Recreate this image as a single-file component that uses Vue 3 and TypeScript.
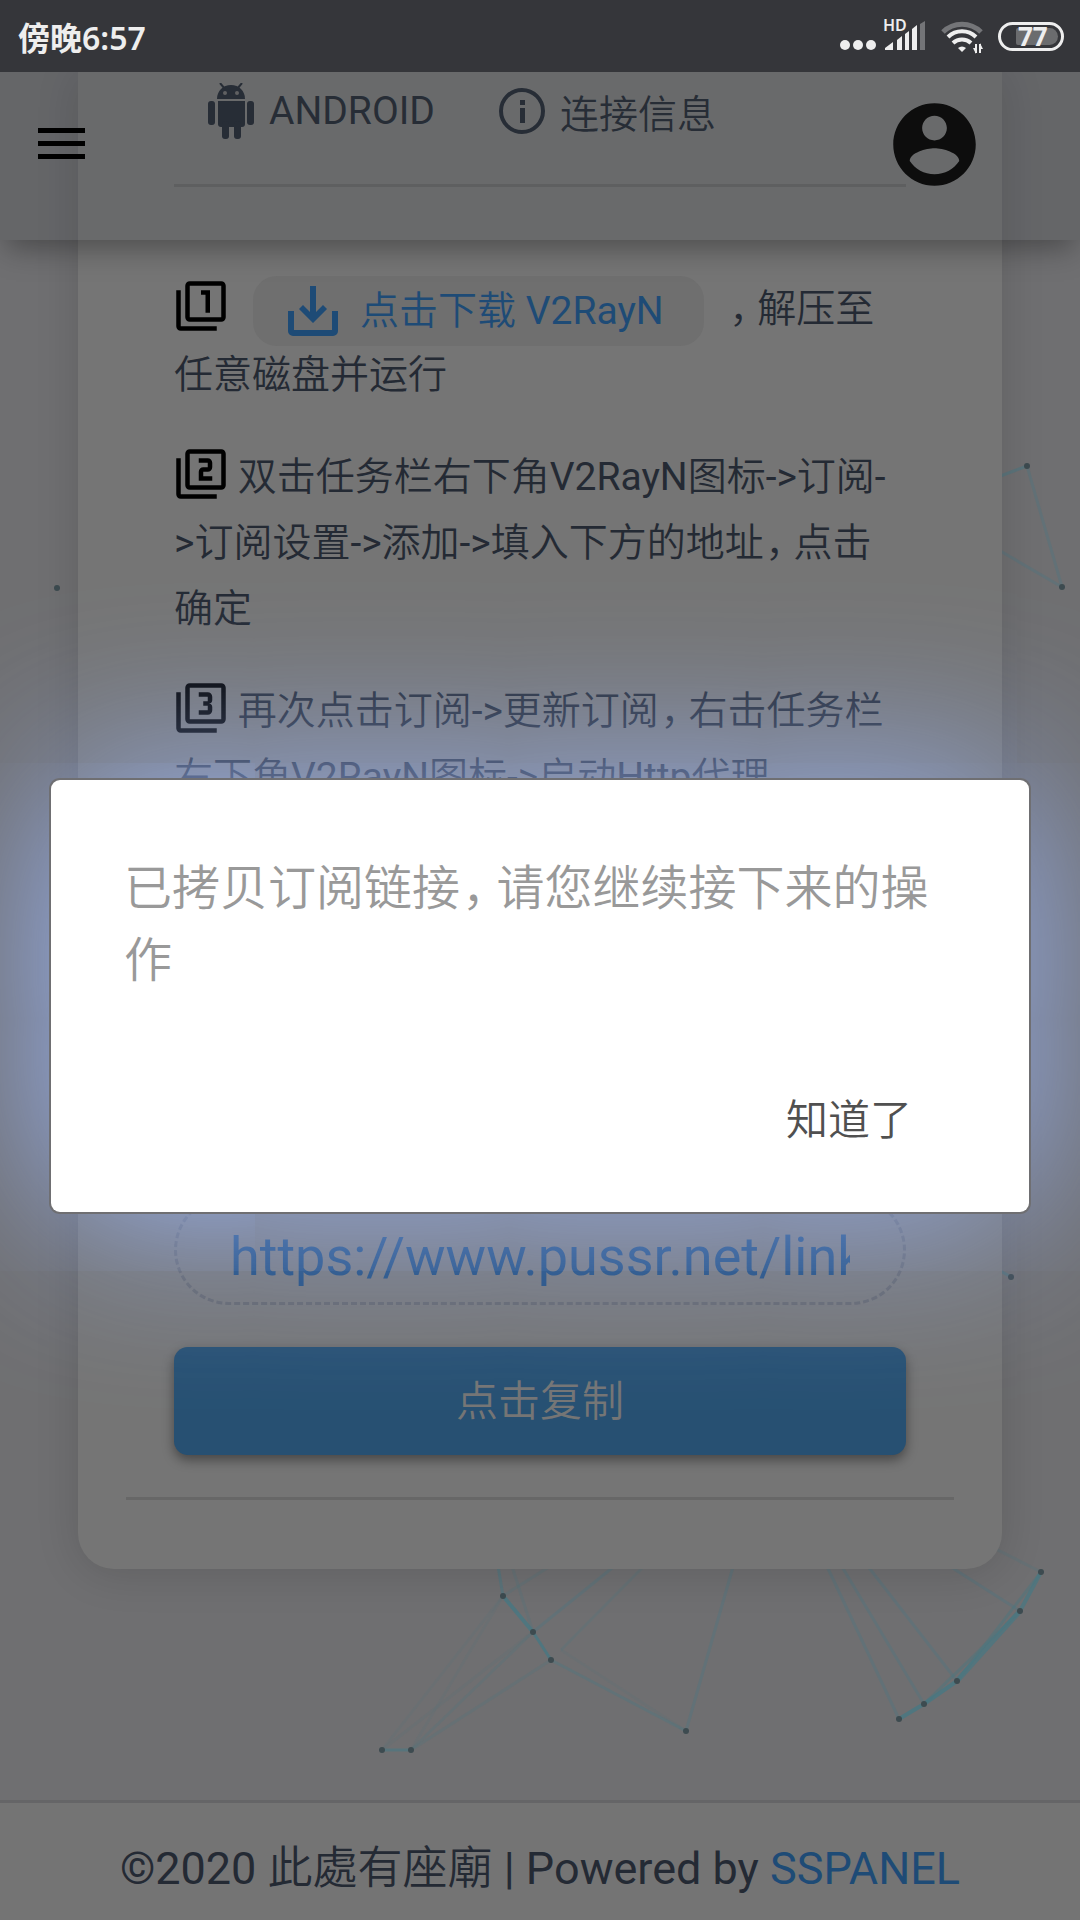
<script setup lang="ts">
import { ref } from 'vue'

interface Node {
  x: number
  y: number
}

interface Edge {
  from: Node
  to: Node
  opacity: number
  width: number
}

const link = ref('https://www.pussr.net/link/subscription?mu=2')
const dialogOpen = ref(true)

const frames =
  'M3 5H1v16c0 1.1.9 2 2 2h16v-2H3V5zM21 1H7c-1.1 0-2 .9-2 2v14c0 1.1.9 2 2 2h14c1.1 0 2-.9 2-2V3c0-1.1-.9-2-2-2zm0 16H7V3h14v14z'
const numerals: string[] = [
  'M14 15h2V5h-4v2h2v8z',
  'M17 13h-4v-2h2c1.1 0 2-.89 2-2V7c0-1.11-.9-2-2-2h-4v2h4v2h-2c-1.1 0-2 .89-2 2v4h6v-2z',
  'M17 13v-1.5c0-.83-.67-1.5-1.5-1.5.83 0 1.5-.67 1.5-1.5V7c0-1.11-.9-2-2-2h-4v2h4v2h-2v2h2v2h-4v2h4c1.1 0 2-.89 2-2z',
]

const nodes: Node[] = [
  { x: 503, y: 1596 }, { x: 533, y: 1632 }, { x: 551, y: 1660 }, { x: 382, y: 1750 },
  { x: 411, y: 1750 }, { x: 686, y: 1731 }, { x: 899, y: 1719 }, { x: 924, y: 1704 },
  { x: 957, y: 1681 }, { x: 1020, y: 1611 }, { x: 1041, y: 1572 }, { x: 1027, y: 466 },
  { x: 1062, y: 587 }, { x: 57, y: 588 }, { x: 1011, y: 1277 },
]

function edge(x1: number, y1: number, x2: number, y2: number, opacity: number, width = 3): Edge {
  return { from: { x: x1, y: y1 }, to: { x: x2, y: y2 }, opacity, width }
}

const edges: Edge[] = [
  edge(503, 1596, 533, 1632, 0.8, 4), edge(533, 1632, 551, 1660, 0.8),
  edge(382, 1750, 411, 1750, 0.6), edge(899, 1719, 924, 1704, 0.8, 4),
  edge(924, 1704, 957, 1681, 0.8, 4), edge(957, 1681, 1020, 1611, 0.7, 5),
  edge(1020, 1611, 1041, 1572, 0.7, 4), edge(924, 1704, 1020, 1611, 0.4),
  edge(957, 1681, 1041, 1572, 0.4), edge(503, 1596, 497, 1560, 0.5),
  edge(503, 1596, 560, 1560, 0.2), edge(533, 1632, 510, 1560, 0.2),
  edge(533, 1632, 622, 1560, 0.3), edge(561, 1650, 650, 1560, 0.2),
  edge(551, 1660, 686, 1731, 0.35), edge(561, 1650, 686, 1731, 0.1),
  edge(686, 1731, 735, 1560, 0.3), edge(382, 1750, 503, 1596, 0.1),
  edge(382, 1750, 533, 1632, 0.1), edge(411, 1750, 503, 1596, 0.1),
  edge(411, 1750, 533, 1632, 0.2), edge(411, 1750, 551, 1660, 0.2),
  edge(899, 1719, 824, 1560, 0.3), edge(924, 1704, 838, 1560, 0.3),
  edge(957, 1681, 863, 1560, 0.3), edge(1020, 1611, 940, 1560, 0.3),
  edge(1041, 1572, 990, 1546, 0.2), edge(990, 480, 1027, 466, 0.5),
  edge(1027, 466, 1062, 587, 0.3), edge(1062, 587, 990, 545, 0.3),
  edge(990, 1265, 1011, 1277, 0.5),
]
</script>

<template>
  <div class="screen">
    <div class="status">
      <span class="clock">傍晚6:57</span>
      <div class="indicators">
        <svg width="86" height="40" viewBox="0 0 86 40" aria-hidden="true">
          <g fill="#eee">
            <circle cx="5" cy="29" r="5" />
            <circle cx="18" cy="29" r="5" />
            <circle cx="31" cy="29" r="5" />
            <path d="M45 34v-2l8-6v8zM57 34V24l5-4v14zM65 34V18l4-3v19zM72 34V13l5-4v25z" />
          </g>
          <path d="M80 34V8l5-3v29z" fill="#747578" />
          <text class="hd" x="43" y="15">HD</text>
        </svg>
        <svg width="42" height="40" viewBox="0 0 42 40" fill="none" stroke="#eee" stroke-width="4" aria-hidden="true">
          <path d="M2 16a27 27 0 0 1 38 0" stroke="#747578" stroke-width="5" />
          <path d="M7 21a20 20 0 0 1 28 0" />
          <path d="M12 27a13 13 0 0 1 18 0" />
          <path d="M17 32l4 4 4-4a6 6 0 0 0-8 0z" fill="#eee" stroke="none" />
          <path d="M35 28v9M39 28v9" stroke-width="2" />
          <path d="M32 32h3v6zM42 33h-3v-6z" fill="#eee" stroke="none" />
        </svg>
        <span class="battery"><span class="level">77</span></span>
      </div>
    </div>

    <div class="page">
      <svg class="network" width="1080" height="1848" viewBox="0 72 1080 1848" aria-hidden="true">
        <line
          v-for="(e, i) in edges"
          :key="`e${i}`"
          :x1="e.from.x"
          :y1="e.from.y"
          :x2="e.to.x"
          :y2="e.to.y"
          :stroke-opacity="e.opacity"
          :stroke-width="e.width"
          stroke="#477883"
        />
        <circle v-for="(n, i) in nodes" :key="`n${i}`" :cx="n.x" :cy="n.y" r="3" fill="#3d4b50" />
      </svg>

      <header class="topbar">
        <button class="icon-button" type="button" aria-label="菜单">
          <svg width="47" height="32" viewBox="0 0 47 32" aria-hidden="true">
            <path d="M0 0h47v5H0zM0 13h47v5H0zM0 26h47v5H0z" fill="#000" />
          </svg>
        </button>
        <button class="icon-button" type="button" aria-label="账户">
          <svg width="99" height="99" viewBox="0 0 24 24" aria-hidden="true">
            <path
              fill="#0d0d0d"
              d="M12 2C6.480 2 2 6.480 2 12s4.480 10 10 10 10-4.480 10-10S17.520 2 12 2zm0 3c1.660 0 3 1.340 3 3s-1.340 3-3 3-3-1.340-3-3 1.340-3 3-3zm0 14.200c-2.500 0-4.710-1.280-6-3.220.030-1.990 4-3.080 6-3.080 1.990 0 5.970 1.090 6 3.080-1.290 1.940-3.500 3.220-6 3.220z"
            />
          </svg>
        </button>
      </header>

      <main class="card">
        <div class="body">
          <nav class="tabs">
            <a class="tab" href="#android">
              <svg width="46" height="56" viewBox="0 0 46 56" fill="currentColor" aria-hidden="true">
                <path d="M9 16C9 8 15 2 23 2s14 6 14 14z" />
                <path d="M12 0l5 6M34 0l-5 6" stroke="currentColor" stroke-width="2" />
                <circle cx="17" cy="10" r="2" fill="#696969" />
                <circle cx="29" cy="10" r="2" fill="#696969" />
                <path d="M10 18h27v23a3 3 0 0 1-3 3H13a3 3 0 0 1-3-3z" />
                <rect x="0" y="18" width="7" height="24" rx="3" />
                <rect x="39" y="18" width="7" height="24" rx="3" />
                <rect x="14" y="38" width="7" height="18" rx="3" />
                <rect x="26" y="38" width="7" height="18" rx="3" />
              </svg>
              <span>ANDROID</span>
            </a>
            <a class="tab" href="#info">
              <svg width="46" height="46" viewBox="0 0 46 46" aria-hidden="true">
                <circle cx="23" cy="23" r="21" fill="none" stroke="currentColor" stroke-width="4" />
                <path d="M21 12h5v5h-5zM21 20h5v15h-5z" fill="currentColor" />
              </svg>
              <span>连接信息</span>
            </a>
          </nav>

          <p class="step">
            <svg class="num" viewBox="0 0 24 24" aria-hidden="true"><path :d="frames" /><path :d="numerals[0]" /></svg>
            <a class="download" href="#download"
              ><svg width="50" height="50" viewBox="0 0 50 50" aria-hidden="true">
                <path
                  fill="currentColor"
                  d="M22 0h6v26l7-7 4 4-14 14-14-14 4-4 7 7zM0 25h6v19h38V25h6v20a5 5 0 0 1-5 5H5a5 5 0 0 1-5-5z"
                /></svg
              ><span>点击下载 V2RayN</span></a
            ><span class="comma">，</span>解压至任意磁盘并运行
          </p>
          <p class="step">
            <svg class="num" viewBox="0 0 24 24" aria-hidden="true"><path :d="frames" /><path :d="numerals[1]" /></svg>
            双击任务栏右下角V2RayN图标-&gt;订阅-&gt;订阅设置-&gt;添加-&gt;填入下方的地址<span class="comma">，</span>点击确定
          </p>
          <p class="step">
            <svg class="num" viewBox="0 0 24 24" aria-hidden="true"><path :d="frames" /><path :d="numerals[2]" /></svg>
            再次点击订阅-&gt;更新订阅<span class="comma">，</span>右击任务栏右下角V2RayN图标-&gt;启动Http代理
          </p>

          <input v-model="link" class="link" type="text" aria-label="订阅链接" readonly />
          <button class="copy" type="button" @click="dialogOpen = true">点击复制</button>
        </div>
      </main>

      <footer class="footer">©2020 此處有座廟 | Powered by <a href="#sspanel">SSPANEL</a></footer>

      <div v-if="dialogOpen" class="overlay">
        <section class="dialog" role="alertdialog" aria-describedby="message">
          <p id="message">已拷贝订阅链接<span class="comma">，</span>请您继续接下来的操作</p>
          <button class="confirm" type="button" @click="dialogOpen = false">知道了</button>
        </section>
      </div>
    </div>
  </div>
</template>

<style>
body {
  margin: 0;
}
</style>

<style scoped>
.screen {
  min-height: 100vh;
  display: flex;
  flex-direction: column;
  overflow: hidden;
  background: #6f6f71;
  color: #242a34;
  font-family: Roboto, 'Noto Sans CJK SC DemiLight', 'Noto Sans CJK SC Light', 'Noto Sans CJK SC', sans-serif;
  font-size: 39px;
}

button {
  border: 0;
  padding: 0;
  background: none;
  font: inherit;
  color: inherit;
}

a {
  color: inherit;
  text-decoration: none;
}

svg {
  flex: none;
}

.status {
  height: 72px;
  padding: 0 16px 0 18px;
  display: flex;
  align-items: center;
  justify-content: space-between;
  background: #35363a;
  color: #eee;
  position: relative;
  z-index: 4;
}

.clock {
  font: 600 32px 'Noto Sans', 'Noto Sans CJK TC', sans-serif;
}

.indicators {
  display: flex;
  align-items: center;
  gap: 15px;
}

.indicators svg {
  overflow: visible;
}

.hd {
  font: 600 16px 'Noto Sans', sans-serif;
  fill: #eee;
}

.battery {
  box-sizing: border-box;
  width: 66px;
  height: 29px;
  padding: 3px 3px 3px 15px;
  border: 3px solid #eee;
  border-radius: 15px;
  display: flex;
}

.level {
  flex: 1;
  padding-left: 2px;
  border-radius: 2px 9px 9px 2px;
  background: #6b6c6e;
  font: 700 26px/17px 'Noto Sans', sans-serif;
}

.page {
  flex: 1;
  display: flex;
  flex-direction: column;
  position: relative;
}

.network {
  position: absolute;
  top: 0;
  left: 0;
}

.topbar {
  position: absolute;
  inset: 0 0 auto;
  z-index: 2;
  box-sizing: border-box;
  height: 168px;
  padding: 0 96px 24px 38px;
  display: flex;
  align-items: center;
  justify-content: space-between;
  background: rgba(54, 60, 66, 0.18);
  box-shadow: 0 14px 28px -6px rgba(0, 0, 0, 0.34);
}

.icon-button {
  display: flex;
}

.card {
  position: relative;
  margin: 0 78px;
  padding: 0 48px 69px;
  border-radius: 0 0 36px 36px;
  background: #757575;
  box-shadow: 0 4px 44px rgba(0, 0, 0, 0.14);
}

.body {
  padding: 0 48px 42px;
  border-bottom: 3px solid #676767;
}

.tabs {
  height: 112px;
  padding-left: 34px;
  display: flex;
  gap: 64px;
  border-bottom: 3px solid #676767;
}

.tab {
  height: 78px;
  display: flex;
  align-items: center;
  gap: 15px;
}

.step {
  margin: 0 0 36px;
  padding-right: 12px;
  line-height: 66px;
}

.tabs + .step {
  margin-top: 89px;
}

.num {
  width: 54px;
  height: 54px;
  margin: -6px 0;
  fill: #000;
  vertical-align: -5px;
}

.download {
  display: inline-flex;
  align-items: center;
  gap: 22px;
  height: 70px;
  margin: -7px 24px -5px 25px;
  padding: 0 40px 0 35px;
  border-radius: 24px;
  background: #6f6f6f;
  color: #1e4b76;
  vertical-align: middle;
}

.comma {
  margin: 0 0.22em 0 0.04em;
  font-feature-settings: 'halt';
}

.link {
  box-sizing: border-box;
  display: block;
  width: 100%;
  height: 110px;
  margin: 385px 0 42px;
  padding: 12px 53px 0;
  border: 3px dashed #63656a;
  border-radius: 55px;
  outline: 0;
  background: none;
  color: #1e4b7b;
  font: 54px Roboto, sans-serif;
}

.copy {
  display: block;
  width: 100%;
  height: 108px;
  padding-bottom: 8px;
  border-radius: 14px;
  background: #275072;
  box-shadow: 0 5px 12px rgba(0, 0, 0, 0.4);
  color: #757575;
  font-size: 42px;
}

.footer {
  position: relative;
  margin-top: auto;
  padding: 36px 24px 21px;
  border-top: 3px solid #656567;
  background: #747474;
  font-size: 45px;
  line-height: 60px;
  text-align: center;
}

.footer a {
  color: #1e4b76;
}

.overlay {
  position: absolute;
  inset: 0;
  z-index: 3;
  padding: 0 51px;
  display: flex;
  align-items: center;
}

.dialog {
  flex: 1;
  padding: 73px 73px 60px;
  display: flex;
  flex-direction: column;
  border-radius: 9px;
  background: #fff;
  box-shadow: 0 0 0 2px #6f6f72, 0 0 180px #9ebaff;
}

.dialog p {
  margin: 0 0 83px;
  color: #999;
  font-size: 48px;
  line-height: 72px;
}

.confirm {
  align-self: flex-end;
  height: 72px;
  margin-right: 44px;
  color: #505050;
  font-size: 42px;
}
</style>
